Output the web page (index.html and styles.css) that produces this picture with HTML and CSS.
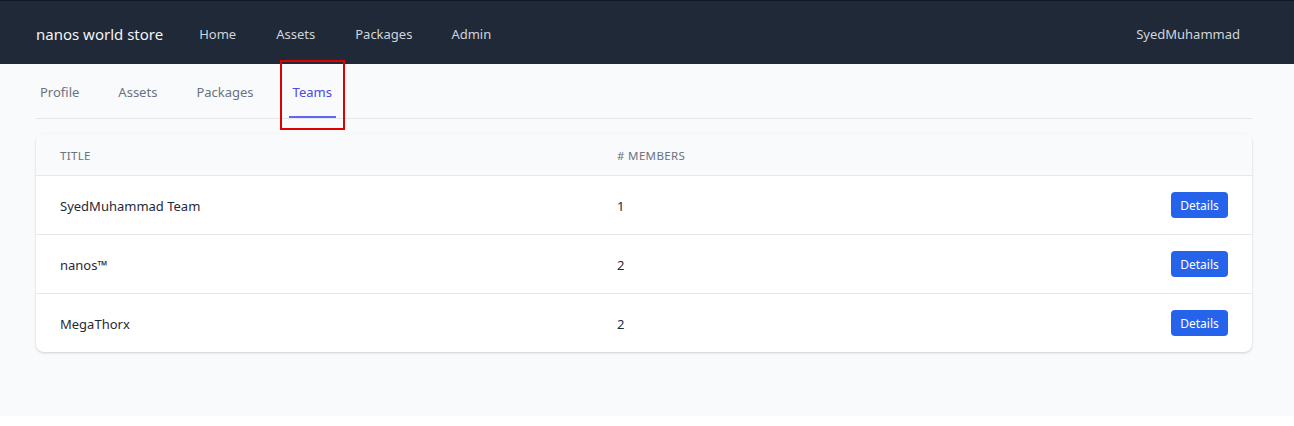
FILE: index.html
```html
<!DOCTYPE html>
<html>
<head>
<meta charset="utf-8">
<link rel="stylesheet" href="styles.css">
</head>
<body>
<nav class="topbar">
  <div class="topbar-left">
    <span class="brand">nanos world store</span>
    <a class="nav-link">Home</a>
    <a class="nav-link">Assets</a>
    <a class="nav-link">Packages</a>
    <a class="nav-link">Admin</a>
  </div>
  <span class="user">SyedMuhammad</span>
</nav>
<main class="main">
  <div class="tabs">
    <a class="tab">Profile</a>
    <a class="tab">Assets</a>
    <a class="tab">Packages</a>
    <a class="tab active">Teams<span class="highlight"></span></a>
  </div>
  <div class="card">
    <div class="row head">
      <div class="c-title">Title</div>
      <div class="c-members"># Members</div>
      <div class="c-action"></div>
    </div>
    <div class="row">
      <div class="c-title">SyedMuhammad Team</div>
      <div class="c-members">1</div>
      <div class="c-action"><button class="btn">Details</button></div>
    </div>
    <div class="row">
      <div class="c-title">nanos™</div>
      <div class="c-members">2</div>
      <div class="c-action"><button class="btn">Details</button></div>
    </div>
    <div class="row">
      <div class="c-title">MegaThorx</div>
      <div class="c-members">2</div>
      <div class="c-action"><button class="btn">Details</button></div>
    </div>
  </div>
</main>
</body>
</html>
```
FILE: styles.css
```css
* { box-sizing: border-box; }
html, body { margin: 0; padding: 0; background: #fff; }
body { font-family: "Noto Sans", "Open Sans", sans-serif; color: #1f2937; }
.topbar {
  height: 64px;
  background: #1f2937;
  border-top: 1px solid #111827;
  display: flex;
  align-items: center;
  justify-content: space-between;
  padding: 2px 54px 0 36px;
}
.topbar-left { display: flex; align-items: center; }
.brand { color: #f3f4f6; font-size: 15px; margin-right: 36px; }
.nav-link { color: #d1d5db; font-size: 13px; margin-right: 40px; }
.nav-link:nth-child(4) { margin-right: 39px; }
.user { color: #d1d5db; font-size: 13px; }
.main {
  background: #f9fafb;
  padding: 0 42px 64px 36px;
}
.tabs {
  display: flex;
  border-bottom: 1px solid #e5e7eb;
  height: 55px;
  padding-left: 4px;
  margin-bottom: 16px;
}
.tab {
  position: relative;
  font-size: 13px;
  color: #6b7280;
  padding-top: 19px;
  margin-right: 39px;
}
.tab.active {
  color: #4f46e5;
  border-bottom: 2px solid #6366f1;
  padding-left: 4px;
  padding-right: 4px;
  margin-left: -4px;
}
.highlight {
  position: absolute;
  left: -9px;
  top: -4px;
  width: 65px;
  height: 70px;
  border: 2px solid #e10000;
}
.card {
  background: #fff;
  border-radius: 8px;
  box-shadow: 0 1px 3px rgba(0,0,0,0.12), 0 1px 2px rgba(0,0,0,0.06);
  overflow: hidden;
  margin-top: -1px;
}
.row {
  display: grid;
  grid-template-columns: 557px 1fr 120px;
  align-items: center;
  height: 59px;
  padding: 1px 24px 0;
  border-top: 1px solid #e5e7eb;
  font-size: 13px;
}
.row .btn { margin-top: -1px; }
.row.head {
  height: 41px;
  border-top: none;
  background: #f9fafb;
  color: #6b7280;
  font-size: 11.5px;
  text-transform: uppercase;
  letter-spacing: 0.03em;
}
.c-action { display: flex; justify-content: flex-end; }
.btn {
  background: #2563eb;
  color: #fff;
  border: none;
  border-radius: 4px;
  height: 26px;
  width: 57px;
  font-family: inherit;
  font-size: 12px;
  padding: 0;
}
```
